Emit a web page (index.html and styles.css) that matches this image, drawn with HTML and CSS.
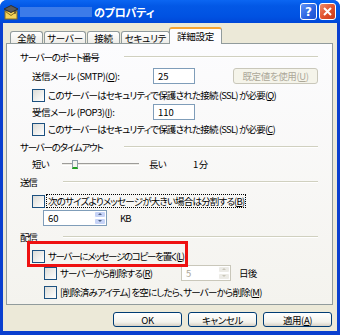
FILE: index.html
```html
<!DOCTYPE html>
<html lang="ja">
<head>
  <meta charset="UTF-8">
  <title>のプロパティ</title>
  <link rel="stylesheet" href="styles.css">
</head>
<body>
  <div class="window">
    <div class="titlebar">
      <svg class="app-icon" width="16" height="16" viewBox="0 0 16 16">
        <rect x="2" y="7" width="12" height="8" fill="#f4d35a" stroke="#8a6d1e"/>
        <path d="M2.5 7.5 L8 11.5 L13.5 7.5" fill="none" stroke="#8a6d1e"/>
        <path d="M1 5 L8 1.5 L15 5 L8 8.5 Z" fill="#5a5a5a" stroke="#2e2e2e"/>
        <path d="M12 6 V10" stroke="#2e2e2e"/>
      </svg>
      <span class="account-name"></span>
      <span class="title">のプロパティ</span>
      <div class="caption-btns">
        <span class="cbtn help">?</span>
        <span class="cbtn close">
          <svg width="9" height="9" viewBox="0 0 9 9"><path d="M1 1 L8 8 M8 1 L1 8" stroke="#fff" stroke-width="2"/></svg>
        </span>
      </div>
    </div>

    <div class="client">
      <div class="tabs">
        <div class="tab t-general">全般</div>
        <div class="tab t-server">サーバー</div>
        <div class="tab t-connect">接続</div>
        <div class="tab t-security">セキュリティ</div>
        <div class="tab active">詳細設定</div>
      </div>

      <div class="panel">
        <div class="group"><span class="group-label wide">サーバーのポート番号</span><i class="rule"></i></div>
        <div class="row field-row first">
          <span class="field-label">送信メール (SMTP)(<u>O</u>):</span>
          <span class="textbox port">25</span>
          <span class="button disabled">既定値を使用(<u>U</u>)</span>
        </div>
        <div class="row check-row">
          <span class="checkbox"></span><span class="check-text">このサーバーはセキュリティで保護された接続 (SSL) が必要(<u>Q</u>)</span>
        </div>
        <div class="row field-row">
          <span class="field-label">受信メール (POP3)(<u>I</u>):</span>
          <span class="textbox port">110</span>
        </div>
        <div class="row check-row tight">
          <span class="checkbox"></span><span class="check-text">このサーバーはセキュリティで保護された接続 (SSL) が必要(<u>C</u>)</span>
        </div>

        <div class="group"><span class="group-label wide">サーバーのタイムアウト</span><i class="rule"></i></div>
        <div class="row slider-row">
          <span class="slider-label">短い</span>
          <span class="slider"><span class="track"></span><span class="thumb"></span></span>
          <span class="slider-max">長い</span>
          <span>1 分</span>
        </div>

        <div class="group"><span class="group-label">送信</span><i class="rule"></i></div>
        <div class="row check-row spaced">
          <span class="checkbox"></span><span class="check-text focused">次のサイズよりメッセージが大きい場合は分割する(<u>B</u>)</span>
        </div>
        <div class="row spin-row">
          <span class="spin size">60<span class="spin-btns"><i class="up"></i><i class="down"></i></span></span>
          <span class="unit">KB</span>
        </div>

        <div class="group"><span class="group-label">配信</span><i class="rule"></i></div>
        <div class="row check-row spaced">
          <span class="checkbox"></span><span class="check-text kana">サーバーにメッセージのコピーを置く(<u>L</u>)</span>
        </div>
        <div class="row check-row sub">
          <span class="checkbox"></span><span class="check-text days-label">サーバーから削除する(<u>R</u>)</span>
          <span class="spin days disabled">5<span class="spin-btns"><i class="up"></i><i class="down"></i></span></span>
          <span class="unit">日後</span>
        </div>
        <div class="row check-row sub">
          <span class="checkbox"></span><span class="check-text">[削除済みアイテム] を空にしたら、サーバーから削除(<u>M</u>)</span>
        </div>

        <div class="highlight"></div>
      </div>

      <div class="buttons">
        <span class="button">OK</span>
        <span class="button">キャンセル</span>
        <span class="button">適用(<u>A</u>)</span>
      </div>
    </div>
  </div>
</body>
</html>
```

FILE: styles.css
```css
body {
  margin: 0;
  font-family: "Noto Sans CJK JP", "Noto Sans", sans-serif;
  font-size: 9.5px;
  font-feature-settings: "palt";
  letter-spacing: -0.8px;
  color: #000;
  background: #fff;
}

.window {
  width: 340px;
  height: 335px;
  display: flex;
  flex-direction: column;
  background: #0a3fcf;
  border-radius: 7px 7px 0 0;
  overflow: hidden;
}

/* タイトルバー */
.titlebar {
  height: 23px;
  flex: none;
  display: flex;
  align-items: center;
  padding: 0 4px 0 3px;
  background: linear-gradient(#0b66f2, #0358e6 25%, #0052e2 70%, #0047d8);
  color: #fff;
}

.app-icon {
  flex: none;
}

.account-name {
  width: 72px;
  height: 10px;
  margin-left: 1px;
  background: #3c7be9;
}

.title {
  margin-left: 2px;
  font-size: 11px;
  font-weight: bold;
  letter-spacing: -0.2px;
}

.caption-btns {
  margin-left: auto;
  display: flex;
  gap: 2px;
}

.cbtn {
  width: 15px;
  height: 15px;
  border: 1px solid #fff;
  border-radius: 3px;
  display: flex;
  align-items: center;
  justify-content: center;
  color: #fff;
  font-family: "DejaVu Sans", sans-serif;
  font-weight: bold;
  font-size: 12px;
  letter-spacing: 0;
}

.help {
  background: linear-gradient(135deg, #5f93f7, #2a62e0 60%, #1d50cf);
}

.close {
  background: linear-gradient(135deg, #ef8b6a, #e0502a 55%, #c8391a);
}

/* 本体 */
.client {
  flex: 1;
  margin: 0 3px 4px 3px;
  background: #ece9d8;
  display: flex;
  flex-direction: column;
}

.tabs {
  display: flex;
  align-items: flex-end;
  height: 16px;
  margin-top: 5px;
  margin-bottom: -1px;
  padding-left: 7px;
}

.tab {
  height: 12px;
  line-height: 12px;
  margin-right: 1px;
  border: 1px solid #919b9c;
  border-bottom: none;
  border-radius: 3px 3px 0 0;
  background: linear-gradient(#fff, #ecebe6);
  text-align: center;
  letter-spacing: -0.2px;
}

.t-general { width: 31px; }
.t-server { width: 40px; }
.t-connect { width: 31px; }
.t-security { width: 47px; }

.tab.active {
  width: 51px;
  height: 15px;
  margin-left: -2px;
  border-top: 2px solid #f7a534;
  line-height: 14px;
  background: #fcfcfe;
  z-index: 1;
}

.panel {
  position: relative;
  height: 262px;
  box-sizing: border-box;
  margin: 0 4px 0 3px;
  padding: 6px 14px 0 13px;
  border: 1px solid #919b9c;
  background: linear-gradient(#fcfcfe, #f4f3ee);
  display: flex;
  flex-direction: column;
}

.row {
  display: flex;
  align-items: center;
  padding-left: 12px;
  white-space: nowrap;
}

.group {
  display: flex;
  align-items: center;
  height: 14px;
  margin-top: 4px;
}

.group:first-child {
  margin-top: 0;
}

.group-label {
  width: 43px;
  flex: none;
  letter-spacing: -1.2px;
}

.group-label.wide {
  width: 104px;
}

.rule {
  flex: 1;
  height: 0;
  border-top: 1px solid #d0d0bf;
  border-bottom: 1px solid #fff;
}

.field-row {
  height: 18px;
  margin-top: 1px;
}

.field-row.first {
  margin-top: 3px;
}

.field-label {
  width: 121px;
  flex: none;
  letter-spacing: -0.5px;
}

.textbox,
.spin {
  height: 16px;
  box-sizing: border-box;
  border: 1px solid #7f9db9;
  background: #fff;
  padding-left: 4px;
  line-height: 14px;
  display: flex;
  align-items: center;
  letter-spacing: 0;
}

.port {
  width: 42px;
}

.button {
  height: 16px;
  box-sizing: border-box;
  border: 1px solid #003c74;
  border-radius: 3px;
  background: linear-gradient(#fff, #f3f2ec 70%, #d6d0c5);
  display: flex;
  align-items: center;
  justify-content: center;
  letter-spacing: -0.4px;
}

.panel .button {
  width: 85px;
  margin-left: auto;
}

.button.disabled {
  border-color: #c9c7ba;
  background: #f5f4ea;
  color: #aca899;
}

.check-row {
  height: 14px;
  margin-top: 3px;
}

.check-row.tight {
  margin-top: 1px;
}

.check-row.spaced {
  margin-top: 5px;
}

.check-row.sub {
  height: 18px;
  margin-top: 1px;
  padding-left: 24px;
}

.checkbox {
  width: 13px;
  height: 13px;
  box-sizing: border-box;
  flex: none;
  border: 1px solid #1c5180;
  background: linear-gradient(135deg, #dcdcd7, #fff);
}

.check-text {
  margin-left: 1px;
  padding: 0 1px;
  line-height: 12px;
  border: 1px solid transparent;
}

.check-text.kana {
  letter-spacing: -1.3px;
}

.check-text.focused {
  border: 1px dotted #000;
}

.days-label {
  width: 119px;
}

.slider-row {
  height: 14px;
  margin-top: 3px;
}

.slider-label {
  width: 30px;
}

.slider {
  position: relative;
  width: 77px;
  height: 10px;
  display: flex;
  align-items: center;
}

.track {
  width: 100%;
  height: 1px;
  border-top: 1px solid #9d9c99;
  border-bottom: 1px solid #fff;
  background: #ecebe6;
}

.thumb {
  position: absolute;
  left: 10px;
  top: 1px;
  width: 4px;
  height: 6px;
  border: 1px solid #8e9ea8;
  border-bottom: 2px solid #21a121;
  background: #f4f4f0;
}

.slider-max {
  width: 44px;
  margin-left: 10px;
}

.spin-row {
  height: 16px;
  margin-top: 2px;
  padding-left: 23px;
}

.spin {
  position: relative;
  padding-right: 0;
}

.size {
  width: 64px;
}

.days {
  width: 50px;
}

.spin-btns {
  margin-left: auto;
  width: 12px;
  height: 14px;
  display: flex;
  flex-direction: column;
}

.spin-btns i {
  flex: 1;
  border: 1px solid #fff;
  border-radius: 2px;
  background: #c6d3f7;
  position: relative;
}

.spin-btns i::after {
  content: "";
  position: absolute;
  left: 3px;
  top: 1px;
  border-left: 2px solid transparent;
  border-right: 2px solid transparent;
}

.spin-btns .up::after {
  border-bottom: 2px solid #4d6185;
}

.spin-btns .down::after {
  border-top: 2px solid #4d6185;
}

.spin.disabled {
  border-color: #c9c7ba;
  color: #aca899;
}

.spin.disabled .spin-btns i {
  background: #ecebe6;
}

.spin.disabled .spin-btns i::after {
  border-bottom-color: #c9c7ba;
  border-top-color: #c9c7ba;
}

.unit {
  margin-left: 13px;
}

.days + .unit {
  margin-left: 8px;
}

/* 注目枠 */
.highlight {
  position: absolute;
  left: 20px;
  top: 197px;
  width: 161px;
  height: 26px;
  box-sizing: border-box;
  border: 3px solid #ee1111;
}

.buttons {
  display: flex;
  justify-content: flex-end;
  gap: 6px;
  margin-top: 7px;
  padding-right: 5px;
}

.buttons .button {
  width: 69px;
  height: 15px;
}
```
